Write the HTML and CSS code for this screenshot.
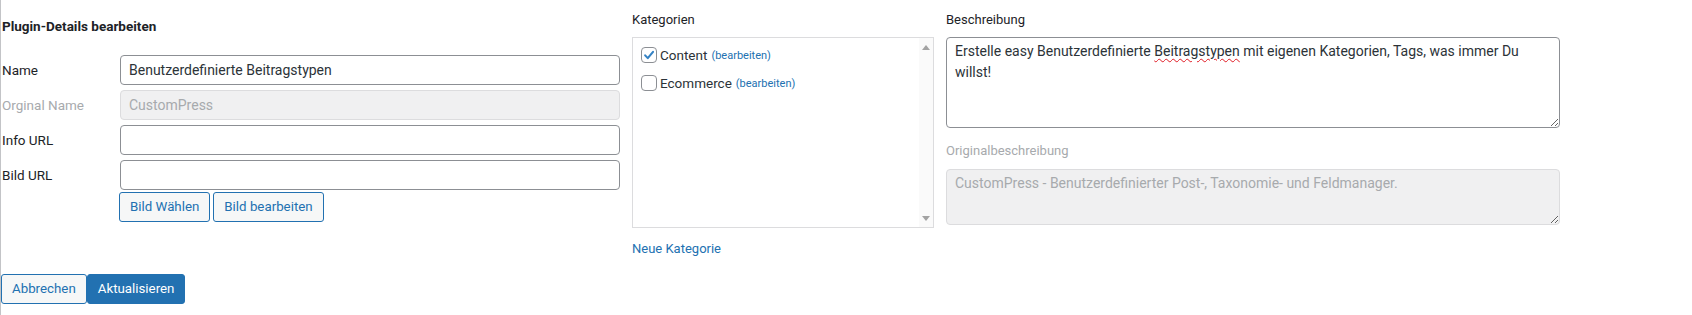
FILE: index.html
```html
<!DOCTYPE html>
<html lang="de">
<head>
<meta charset="utf-8">
<title>Plugin-Details bearbeiten</title>
<link rel="stylesheet" href="styles.css">
</head>
<body>
<div class="page">
  <div class="columns">
    <div class="col-left">
      <h3 class="title">Plugin-Details bearbeiten</h3>
      <div class="row">
        <label class="lbl">Name</label>
        <div class="field">Benutzerdefinierte Beitragstypen</div>
      </div>
      <div class="row">
        <label class="lbl muted">Orginal Name</label>
        <div class="field disabled">CustomPress</div>
      </div>
      <div class="row">
        <label class="lbl">Info URL</label>
        <div class="field"></div>
      </div>
      <div class="row">
        <label class="lbl">Bild URL</label>
        <div class="field"></div>
      </div>
      <div class="btn-row">
        <span class="btn">Bild Wählen</span>
        <span class="btn">Bild bearbeiten</span>
      </div>
    </div>
    <div class="col-mid">
      <div class="head">Kategorien</div>
      <div class="catbox">
        <ul class="catlist">
          <li>
            <span class="cb checked"><svg viewBox="0 0 16 16" width="16" height="16"><path d="M3.6 8.4 L6.6 11.6 L12.6 4.4" fill="none" stroke="#3582c4" stroke-width="2.4" stroke-linecap="round" stroke-linejoin="round"/></svg></span>
            <span class="catname">Content</span><a class="edit">(bearbeiten)</a>
          </li>
          <li>
            <span class="cb"></span>
            <span class="catname">Ecommerce</span><a class="edit">(bearbeiten)</a>
          </li>
        </ul>
        <div class="track">
          <span class="arrow up"></span>
          <span class="arrow down"></span>
        </div>
      </div>
      <a class="newcat">Neue Kategorie</a>
    </div>
    <div class="col-right">
      <div class="head">Beschreibung</div>
      <div class="area">Erstelle easy Benutzerdefinierte <span class="typo">Beitragstypen</span> mit eigenen Kategorien, Tags, was immer Du willst!</div>
      <div class="head muted sub">Originalbeschreibung</div>
      <div class="area disabled small">CustomPress - Benutzerdefinierter Post-, Taxonomie- und Feldmanager.</div>
    </div>
  </div>
  <div class="actions">
    <span class="btn">Abbrechen</span><span class="btn primary">Aktualisieren</span>
  </div>
</div>
</body>
</html>
```
FILE: styles.css
```css
html, body {
  margin: 0;
  padding: 0;
  background: #fff;
}
body {
  font-family: Roboto, "Noto Sans", sans-serif;
  color: #1d2327;
  font-size: 13px;
}
.page {
  border-left: 1px solid #c3c4c7;
  min-height: 315px;
  box-sizing: border-box;
}
.columns {
  display: flex;
  align-items: flex-start;
}
.col-left {
  width: 619px;
  padding-top: 17px;
}
.title {
  margin: 0 0 20px 0;
  font-size: 13.5px;
  font-weight: 700;
  line-height: 18px;
  padding-left: 1px;
}
.row {
  display: flex;
  align-items: center;
  margin-bottom: 5px;
}
.lbl {
  width: 118px;
  font-size: 13.5px;
  padding-left: 1px;
}
.muted {
  color: #a7aaad;
}
.field {
  flex: 1;
  height: 30px;
  box-sizing: border-box;
  border: 1px solid #8c8f94;
  border-radius: 4px;
  padding: 0 8px;
  line-height: 28px;
  font-size: 14px;
  color: #2c3338;
}
.field.disabled {
  background: #f0f0f1;
  border-color: #dcdcde;
  color: #a7aaad;
}
.btn-row {
  display: flex;
  gap: 3px;
  margin-left: 118px;
  margin-top: -3px;
}
.btn {
  display: inline-block;
  height: 30px;
  box-sizing: border-box;
  line-height: 28px;
  padding: 0 10px;
  border: 1px solid #2271b1;
  border-radius: 3px;
  background: #f6f7f7;
  color: #2271b1;
  font-size: 13.3px;
}
.btn.primary {
  background: #2271b1;
  color: #fff;
}
.col-mid {
  width: 302px;
  margin-left: 12px;
  padding-top: 11px;
}
.head {
  font-size: 13px;
  line-height: 18px;
  margin-bottom: 8px;
}
.catbox {
  height: 191px;
  box-sizing: border-box;
  border: 1px solid #dcdcde;
  overflow: hidden;
  background: #fff;
  display: flex;
}
.catlist {
  flex: 1;
  list-style: none;
  margin: 0;
  padding: 9px 0 0 8px;
}
.catlist li {
  display: flex;
  align-items: center;
  height: 16px;
  margin-bottom: 12px;
  font-size: 13.5px;
  white-space: nowrap;
}
.cb {
  width: 16px;
  height: 16px;
  box-sizing: border-box;
  border: 1px solid #8c8f94;
  border-radius: 4px;
  margin-right: 3px;
  display: inline-flex;
  align-items: center;
  justify-content: center;
  overflow: hidden;
  flex-shrink: 0;
}
.cb svg {
  display: block;
}
.catname {
  color: #2c3338;
}
.edit {
  color: #2271b1;
  font-size: 11px;
  margin-left: 4px;
}
.track {
  width: 14px;
  background: #fafafa;
  display: flex;
  flex-direction: column;
  justify-content: space-between;
  align-items: center;
  padding: 7px 0 6px;
}
.arrow {
  width: 0;
  height: 0;
  border-left: 4px solid transparent;
  border-right: 4px solid transparent;
}
.arrow.up {
  border-bottom: 5px solid #a3a3a3;
}
.arrow.down {
  border-top: 5px solid #a3a3a3;
}
.newcat {
  display: block;
  margin-top: 12px;
  color: #2271b1;
  font-size: 13px;
  line-height: 18px;
}
.col-right {
  width: 614px;
  margin-left: 12px;
  padding-top: 11px;
}
.area {
  height: 91px;
  box-sizing: border-box;
  border: 1px solid #8c8f94;
  border-radius: 4px;
  padding: 3px 8px;
  font-size: 14px;
  line-height: 21px;
  color: #2c3338;
  overflow: auto;
  resize: both;
}
.typo {
  text-decoration: underline wavy #e01b24;
  text-decoration-thickness: 1px;
  text-underline-offset: 2px;
}
.sub {
  margin-top: 14px;
  margin-bottom: 9px;
}
.area.disabled {
  background: #f0f0f1;
  border-color: #dcdcde;
  color: #a7aaad;
}
.area.small {
  height: 56px;
}
.actions {
  display: flex;
  margin-top: 16px;
}
```
